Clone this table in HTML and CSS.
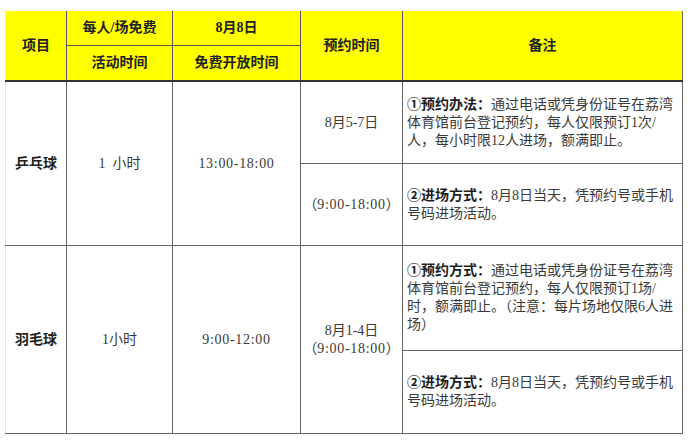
FILE: index.html
```html
<!DOCTYPE html>
<html lang="zh-CN">
<head>
<meta charset="utf-8">
<link rel="stylesheet" href="styles.css">
</head>
<body>
<div class="page">
<table class="sched">
  <colgroup>
    <col class="c1"><col class="c2"><col class="c3"><col class="c4"><col class="c5">
  </colgroup>
  <thead>
    <tr class="h1">
      <th rowspan="2" class="first">项目</th>
      <th>每人/场免费</th>
      <th>8月8日</th>
      <th rowspan="2">预约时间</th>
      <th rowspan="2" class="last">备注</th>
    </tr>
    <tr class="h2">
      <th>活动时间</th>
      <th>免费开放时间</th>
    </tr>
  </thead>
  <tbody>
    <tr class="ra">
      <td rowspan="2" class="first name">乒乓球</td>
      <td rowspan="2">1&nbsp; 小时</td>
      <td rowspan="2"><span class="num">13:00-18:00</span></td>
      <td>8月5-7日</td>
      <td class="note last"><b>①预约办法：</b>通过电话或凭身份证号在荔湾<br>体育馆前台登记预约，每人仅限预订1次/<br>人，每小时限12人进场，额满即止。</td>
    </tr>
    <tr class="ra">
      <td>（<span class="num">9:00-18:00</span>）</td>
      <td class="note last"><b>②进场方式：</b>8月8日当天，凭预约号或手机<br>号码进场活动。</td>
    </tr>
    <tr class="rb1">
      <td rowspan="2" class="first name">羽毛球</td>
      <td rowspan="2">1小时</td>
      <td rowspan="2"><span class="num">9:00-12:00</span></td>
      <td rowspan="2">8月1-4日<br>（<span class="num">9:00-18:00</span>）</td>
      <td class="note last"><b>①预约方式：</b>通过电话或凭身份证号在荔湾<br>体育馆前台登记预约，每人仅限预订1场/<br>时，额满即止。（注意：每片场地仅限6人进<br>场）</td>
    </tr>
    <tr class="rb2">
      <td class="note last"><b>②进场方式：</b>8月8日当天，凭预约号或手机<br>号码进场活动。</td>
    </tr>
  </tbody>
</table>
</div>
</body>
</html>
```
FILE: styles.css
```css
html, body {
  margin: 0;
  padding: 0;
  background: #ffffff;
}
.page {
  padding: 11px 0 0 5px;
}
.sched {
  border-collapse: collapse;
  table-layout: fixed;
  width: 677px;
  font-family: "Liberation Serif", "Noto Sans CJK SC", serif;
  font-size: 14px;
  color: #3a3a3a;
}
.c1 { width: 61px; }
.c2 { width: 106px; }
.c3 { width: 128px; }
.c4 { width: 102px; }
.c5 { width: 280px; }
.sched th, .sched td {
  border: 1px solid #666;
  padding: 0;
  text-align: center;
  vertical-align: middle;
  line-height: 18px;
  white-space: nowrap;
}
.sched th {
  background: #ffff00;
  color: #222;
  font-weight: bold;
  border-color: #555;
}
.sched thead tr:first-child th { border-top: none; }
.sched .h2 th { border-bottom: 2px solid #333; }
.sched .h1 th[rowspan] { border-bottom: 2px solid #333; }
.h1 th, .h2 th { height: 34px; }
.sched .first { border-left: 1px solid #e6e6e6; }
.sched th.first { border-left-color: #f0f0a0; }
.ra td { height: 81px; }
.rb1 td { height: 104px; }
.rb2 td { height: 82px; }
.sched .name { font-weight: bold; color: #222; }
.num { letter-spacing: 0.7px; }
.sched .note {
  text-align: left;
  padding-left: 4px;
  color: #3a3a3a;
}
.note b { color: #1e1e1e; }
.sched .last { border-right: 1px solid #666; }
```
